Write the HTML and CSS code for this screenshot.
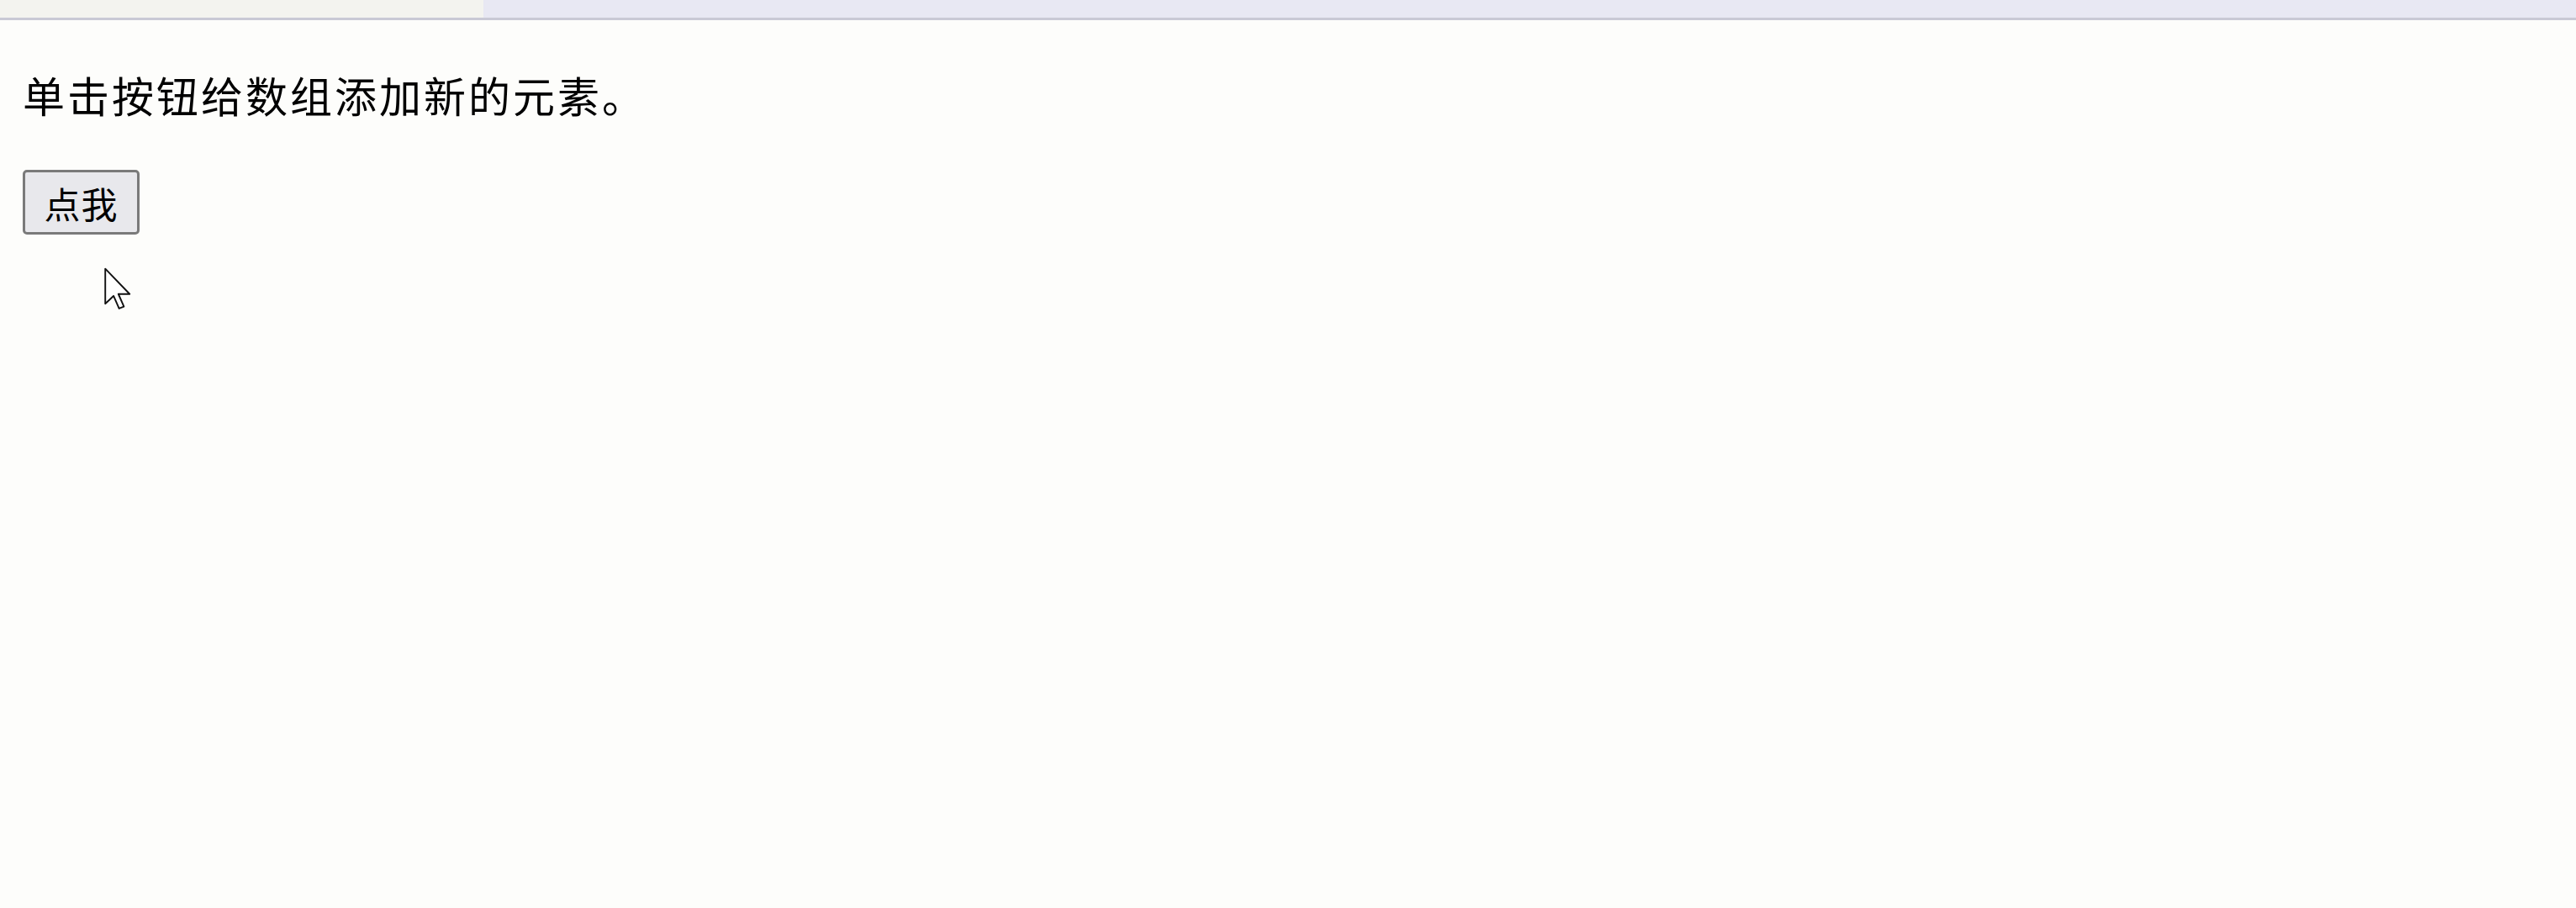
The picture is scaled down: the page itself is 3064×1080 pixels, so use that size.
FILE: index.html
```html
<!DOCTYPE html>
<html lang="zh-CN">
<head>
    <meta charset="UTF-8">
    <meta name="viewport" content="width=device-width, initial-scale=1.0">
    <title>添加数组元素</title>
    <link rel="stylesheet" href="styles.css">
</head>
<body>
    <div class="topbar">
        <div class="tab"></div>
        <div class="strip"></div>
    </div>
    <div class="page">
        <p id="demo">单击按钮给数组添加新的元素。</p>
        <button class="btn" onclick="addItem()">点我</button>
    </div>

    <svg class="cursor" width="34" height="52" viewBox="0 0 12 19">
        <path d="M0.6 0.6 V15.8 L4.2 12.4 L6.6 17.9 L8.7 17 L6.3 11.6 H11.2 Z" fill="#fff" stroke="#111" stroke-width="0.7" stroke-linejoin="round"/>
    </svg>

    <script>
        var fruits = ["Banana", "Orange", "Apple", "Mango"];
        function addItem() {
            fruits.push("Kiwi");
            document.getElementById("demo").textContent = fruits.join(",");
        }
    </script>
</body>
</html>
```

FILE: styles.css
```css
body {
    margin: 0;
    background-color: #fdfdfb;
    font-family: "Noto Sans CJK SC", "Liberation Sans", sans-serif;
    color: #000;
}
.topbar {
    display: flex;
    height: 21px;
    border-bottom: 3px solid #c9c9d5;
}
.tab {
    width: 575px;
    background-color: #f3f3ef;
}
.strip {
    flex: 1;
    background-color: #e8e8f3;
}
.page {
    padding: 0 25px 0 27px;
}
p {
    margin: 50px 0 51px 0;
    font-size: 50px;
    line-height: 77px;
    letter-spacing: 3px;
}
.btn {
    display: block;
    width: 139px;
    height: 77px;
    padding: 0;
    font-family: "Noto Sans CJK SC", sans-serif;
    font-size: 43px;
    letter-spacing: 1px;
    color: #000;
    background-color: #e8e8ec;
    border: 3px solid #7a7a7a;
    border-radius: 5px;
    cursor: pointer;
}
.cursor {
    position: absolute;
    left: 123px;
    top: 318px;
}
```
